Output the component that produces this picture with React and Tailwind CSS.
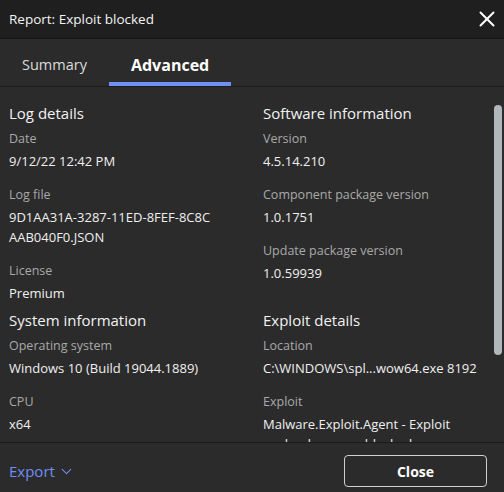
import { X, ChevronDown } from "lucide-react";

const sections = [
  {
    left: {
      title: "Log details",
      items: [
        { label: "Date", value: ["9/12/22 12:42 PM"] },
        { label: "Log file", value: ["9D1AA31A-3287-11ED-8FEF-8C8C", "AAB040F0.JSON"] },
        { label: "License", value: ["Premium"] },
      ],
    },
    right: {
      title: "Software information",
      items: [
        { label: "Version", value: ["4.5.14.210"] },
        { label: "Component package version", value: ["1.0.1751"] },
        { label: "Update package version", value: ["1.0.59939"] },
      ],
    },
  },
  {
    left: {
      title: "System information",
      items: [
        { label: "Operating system", value: ["Windows 10 (Build 19044.1889)"] },
        { label: "CPU", value: ["x64"] },
      ],
    },
    right: {
      title: "Exploit details",
      items: [
        { label: "Location", value: ["C:\\WINDOWS\\spl...wow64.exe 8192"] },
        { label: "Exploit", value: ["Malware.Exploit.Agent - Exploit", "payload process blocked"] },
      ],
    },
  },
];

const Section = ({ data }) => (
  <div>
    <h3 className="text-[15px] leading-[20px] text-[#f2f2f2] mb-[6px]">{data.title}</h3>
    <div className="flex flex-col gap-[14px]">
      {data.items.map((item) => (
        <div key={item.label}>
          <p className="text-[12.5px] leading-[20px] text-[#a9a9a9]">{item.label}</p>
          <div className="mt-[2px] text-[13px] leading-[20px] text-[#f0f0f0]">
            {item.value.map((line) => (
              <p key={line}>{line}</p>
            ))}
          </div>
        </div>
      ))}
    </div>
  </div>
);

export default function App() {
  return (
    <div
      className="w-[504px] h-[492px] flex flex-col bg-[#2b2b2b] text-white overflow-hidden"
      style={{ fontFamily: '"Open Sans", "Noto Sans", sans-serif' }}
    >
      {/* Header */}
      <div className="h-[39px] shrink-0 flex items-center justify-between pl-[9px] pr-[4px] bg-[#1f1f1f] border-b border-[#161616]">
        <span className="text-[13.5px] text-[#f4f4f4]">Report: Exploit blocked</span>
        <X size={26} strokeWidth={1.8} className="text-white" />
      </div>

      {/* Tabs */}
      <div className="h-[48px] shrink-0 flex border-b border-[#1c1c1c]">
        <button className="h-full px-[22px] pt-[8px] text-[14.5px] text-[#dcdcdc] border-b-4 border-transparent">
          Summary
        </button>
        <button className="h-full px-[22px] pt-[8px] text-[16px] font-bold text-white border-b-4 border-[#7090f2]">
          Advanced
        </button>
      </div>

      {/* Content */}
      <div className="relative flex-1 overflow-hidden">
        <div className="pt-[16px] pl-[9px] flex flex-col gap-[7px]">
          {sections.map((row, i) => (
            <div key={i} className="grid grid-cols-[254px_1fr]">
              <Section data={row.left} />
              <Section data={row.right} />
            </div>
          ))}
        </div>
        <div className="absolute right-[2px] top-[18px] w-[8px] h-[250px] rounded-full bg-[#b2b6bd]" />
      </div>

      {/* Footer */}
      <div className="h-[50px] shrink-0 flex items-center justify-between pl-[9px] pr-[17px] pt-[7px] border-t border-[#1a1a1a]">
        <button className="flex items-center gap-[3px] text-[15px] text-[#6e8ef2]">
          Export
          <ChevronDown size={17} strokeWidth={1.5} />
        </button>
        <button className="w-[143px] h-[32px] rounded-[4px] border border-[#d0d0d0] text-[14px] font-bold text-white">
          Close
        </button>
      </div>
    </div>
  );
}
